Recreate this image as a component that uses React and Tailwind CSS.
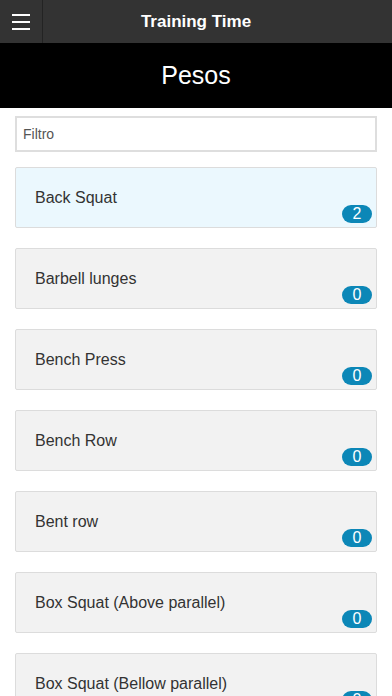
import React from 'react';

const exercises = [
  { name: 'Back Squat', count: 2, active: true },
  { name: 'Barbell lunges', count: 0 },
  { name: 'Bench Press', count: 0 },
  { name: 'Bench Row', count: 0 },
  { name: 'Bent row', count: 0 },
  { name: 'Box Squat (Above parallel)', count: 0 },
  { name: 'Box Squat (Bellow parallel)', count: 0 },
];

const ExerciseCard = ({ name, count, active }) => (
  <div
    className={`relative h-[61px] shrink-0 rounded-[2px] border border-[#dcdcdc] flex items-center pl-[19px] ${
      active ? 'bg-[#ebf8fe]' : 'bg-[#f2f2f2]'
    }`}
  >
    <span className="text-[16px] text-[#333]">{name}</span>
    <span className="absolute right-[4px] bottom-[4px] h-[18px] w-[30px] rounded-full bg-[#0c87b7] text-white text-[16px] leading-[18px] text-center">
      {count}
    </span>
  </div>
);

export default function App() {
  return (
    <div className="w-[392px] h-[696px] overflow-hidden bg-white font-['Liberation_Sans',Arial,sans-serif]">
      {/* Top bar */}
      <div className="h-[43px] bg-[#333] flex items-center relative">
        <button className="w-[43px] h-[43px] border-r border-[#232323] flex flex-col items-center justify-center gap-[5px]">
          <span className="block w-[18px] h-[2px] bg-white" />
          <span className="block w-[18px] h-[2px] bg-white" />
          <span className="block w-[18px] h-[2px] bg-white" />
        </button>
        <h1 className="absolute inset-x-0 text-center text-white font-bold text-[17px] pointer-events-none">
          Training Time
        </h1>
      </div>

      {/* Page header */}
      <div className="h-[65px] bg-black flex items-center justify-center">
        <h2 className="text-white text-[25px]">Pesos</h2>
      </div>

      <div className="px-[15px] pt-[8px] flex flex-col gap-[20px]">
        <div className="h-[36px] -mb-[5px] border-2 border-[#dedede] flex items-center px-[6px]">
          <input
            placeholder="Filtro"
            className="w-full outline-none text-[14px] text-[#555] placeholder:text-[#555] bg-transparent"
          />
        </div>
        {exercises.map((ex) => (
          <ExerciseCard key={ex.name} {...ex} />
        ))}
      </div>
    </div>
  );
}
